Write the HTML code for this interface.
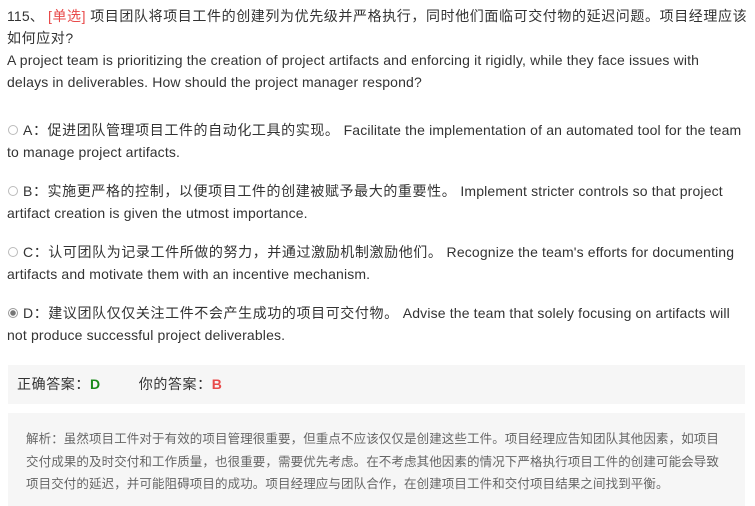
<!DOCTYPE html><html><head><meta charset="utf-8"><style>
body{margin:0;width:755px;height:506px;background:#fff;font-family:"Liberation Sans","Noto Sans CJK SC",sans-serif;font-size:14px;color:#333;position:relative;overflow:hidden}
.b{position:absolute;left:7px;width:760px;line-height:22px;white-space:nowrap;letter-spacing:0.15px}
.c{letter-spacing:0.6px}
.r{display:inline-block;width:10px;height:10px;border:1px solid #bbb;border-radius:50%;box-sizing:border-box;margin-right:5px;margin-left:1px;vertical-align:0px;background:#fff}
.rs{border-color:#999;background:radial-gradient(circle,#777 0 2.5px,#fff 3px)}
.ans{position:absolute;left:8px;top:365px;width:737px;height:39px;background:#f6f6f6;line-height:39px}
.exp{position:absolute;left:8px;top:413px;width:737px;height:93px;background:#f6f6f6;color:#666;font-size:12.5px}
</style></head><body>
<div class="b" style="top:5px">115、 <span class="c" style="color:#e84a4a">[单选]</span> <span class="c">项目团队将项目工件的创建列为优先级并严格执行，同时他们面临可交付物的延迟问题。项目经理应该<br>如何应对?</span><br>A project team is prioritizing the creation of project artifacts and enforcing it rigidly, while they face issues with<br>delays in deliverables. How should the project manager respond?</div>
<div class="b" style="top:119px"><span class="r"></span><span class="c">A：促进团队管理项目工件的自动化工具的实现。</span> Facilitate the implementation of an automated tool for the team<br>to manage project artifacts.</div>
<div class="b" style="top:180px"><span class="r"></span><span class="c">B：实施更严格的控制，以便项目工件的创建被赋予最大的重要性。</span> Implement stricter controls so that project<br>artifact creation is given the utmost importance.</div>
<div class="b" style="top:241px"><span class="r"></span><span class="c">C：认可团队为记录工件所做的努力，并通过激励机制激励他们。</span> Recognize the team's efforts for documenting<br>artifacts and motivate them with an incentive mechanism.</div>
<div class="b" style="top:302px"><span class="r rs"></span><span class="c">D：建议团队仅仅关注工件不会产生成功的项目可交付物。</span> Advise the team that solely focusing on artifacts will<br>not produce successful project deliverables.</div>
<div class="ans"><span class="c" style="margin-left:9px">正确答案：<b style="color:#1a8a1a">D</b></span><span class="c" style="margin-left:38px">你的答案：<b style="color:#e84a4a">B</b></span></div>
<div class="exp"><div style="position:absolute;left:18px;top:15px;width:760px;line-height:22.5px;white-space:nowrap;letter-spacing:0.1px">解析：虽然项目工件对于有效的项目管理很重要，但重点不应该仅仅是创建这些工件。项目经理应告知团队其他因素，如项目<br>交付成果的及时交付和工作质量，也很重要，需要优先考虑。在不考虑其他因素的情况下严格执行项目工件的创建可能会导致<br>项目交付的延迟，并可能阻碍项目的成功。项目经理应与团队合作，在创建项目工件和交付项目结果之间找到平衡。</div></div>
</body></html>
